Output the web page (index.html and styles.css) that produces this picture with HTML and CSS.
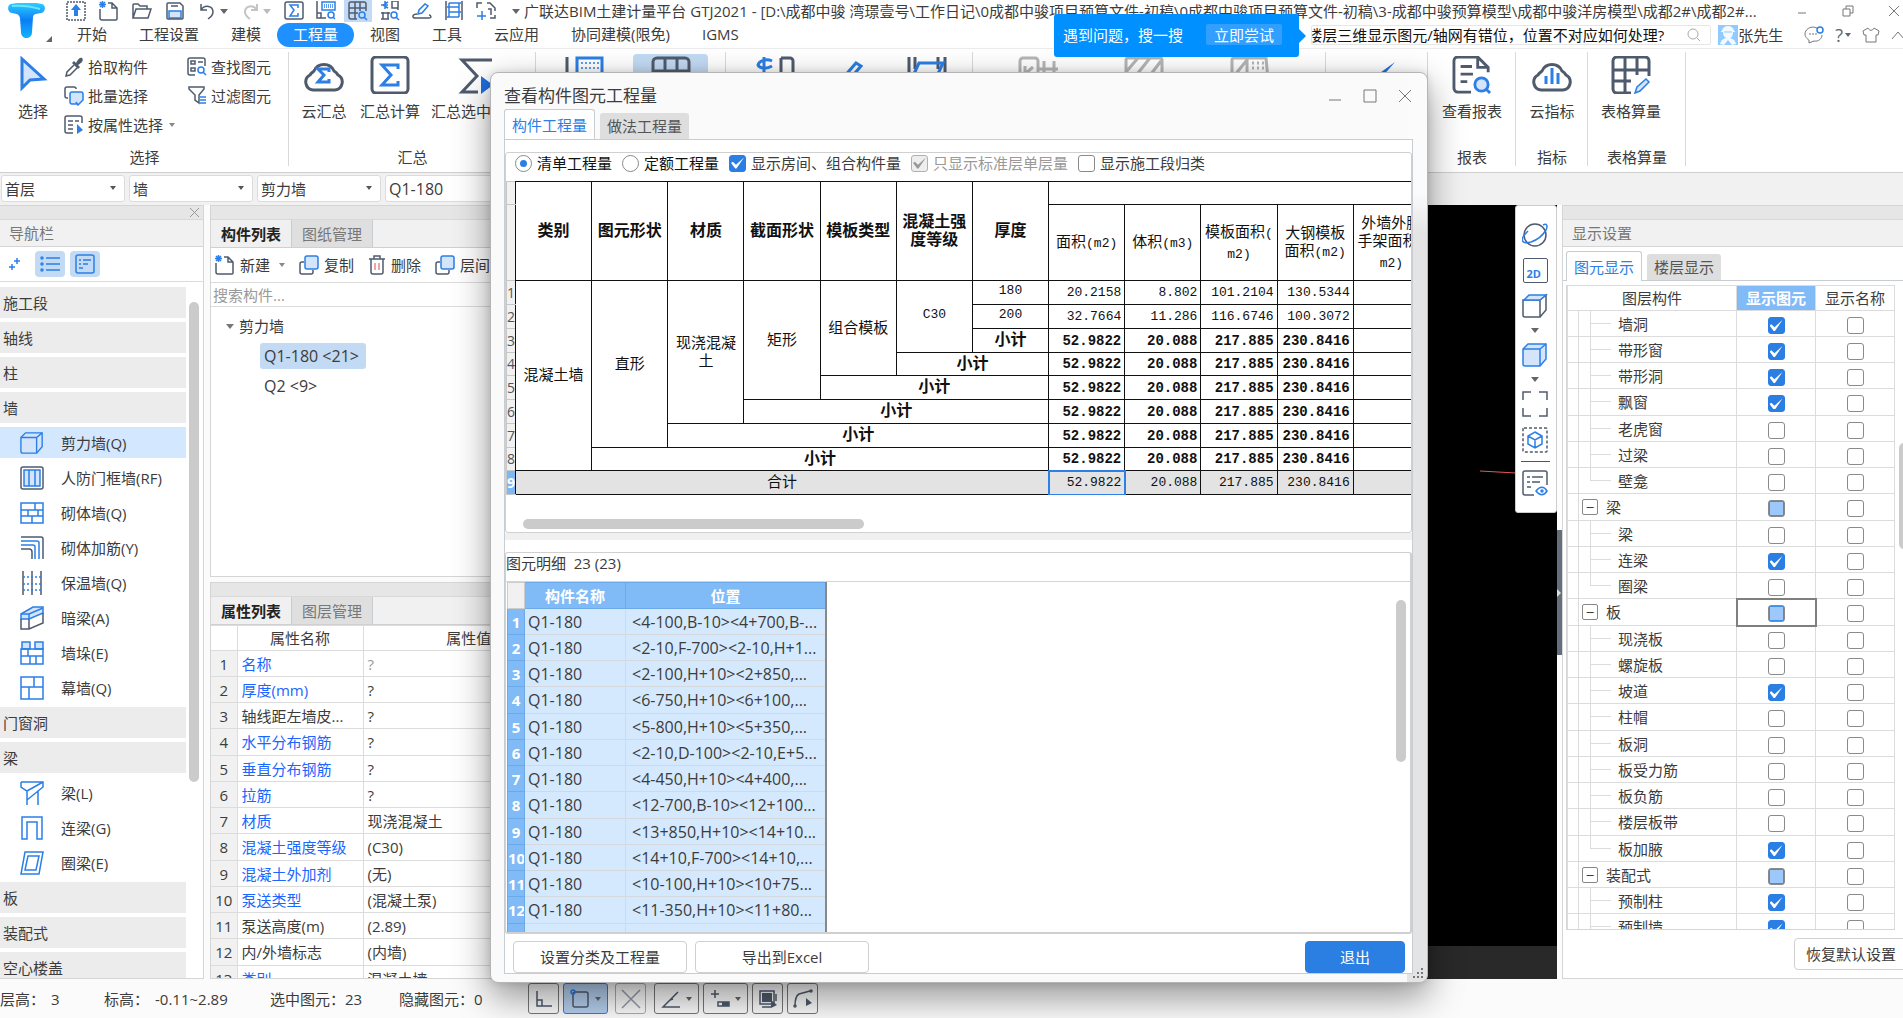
FILE: index.html
```html
<!DOCTYPE html>
<html lang="zh-CN">
<head>
<meta charset="utf-8">
<title>广联达BIM土建计量平台 GTJ2021</title>
<link rel="stylesheet" href="styles.css">
</head>
<body>
<svg class="defs" aria-hidden="true">
  <defs>
    <linearGradient id="logo-fill" x1="0" y1="0" x2="0" y2="1"><stop offset="0" stop-color="#2fd0ff"/><stop offset=".5" stop-color="#0b7df5"/><stop offset="1" stop-color="#12b5ff"/></linearGradient>
    <symbol id="i-newfile" viewBox="0 0 20 20"><path class="d" d="M1 8v9a2 2 0 0 0 2 2h14a1 1 0 0 0 1-1V7l-5-5H9M13 2v5h5"/><path class="b" d="M1 1l5 5M6 1L1 6M3.500 0v7M0 3.500h7"/></symbol>
    <symbol id="i-copy" viewBox="0 0 20 20"><path class="d" d="M5 7H3a2 2 0 0 0-2 2v8a2 2 0 0 0 2 2h9a2 2 0 0 0 2-2v-2"/><rect class="bf" x="6" y="1" width="13" height="13" rx="2"/></symbol>
    <symbol id="i-cube" viewBox="0 0 26 26"><path class="d" d="M1 7h17v17H3a2 2 0 0 1-2-2zM18 7l6-5v15l-6 7"/><path class="bf" d="M2 7l5-5h17l-6 5z"/></symbol>
    <symbol id="i-cubeb" viewBox="0 0 26 26"><path class="bf" d="M1 7l5-5h18v15l-6 7H3a2 2 0 0 1-2-2z"/><path class="b" d="M1 7h17v17M18 7l6-5"/></symbol>
    <symbol id="i-cloud" viewBox="0 0 40 34"><path class="d w" d="M9 32a8 8 0 0 1-3-15c1-2 3-3 4-4a11 11 0 0 1 20 0c2 1 3 2 4 4a8 8 0 0 1-3 15z"/></symbol>
    <symbol id="i-gridq" viewBox="0 0 20 20"><path class="d" d="M18 10V3a2 2 0 0 0-2-2H3a2 2 0 0 0-2 2v13a2 2 0 0 0 2 2h6M1 7h17M1 12h9M7 1v17M12 1v9"/><circle class="b" cx="14" cy="14" r="3"/><path class="b" d="M16 16l3 3"/></symbol>
  </defs>
</svg>

<header class="top">
  <div class="brand">
    <svg width="38" height="36" viewBox="0 0 38 36"><path fill="url(#logo-fill)" d="M3 1c8-2 24-2 31 0 4 1 4 8-1 9-4 1-7 0-8 4l-1 15c0 8-11 8-11 0l-1-14c-1-5-5-4-8-5C-1 9-1 2 3 1z"/><path d="M4 3c9-1 18 0 28 3" stroke="#6be4ff" stroke-width="2" fill="none"/></svg>
    <i class="corner"></i>
  </div>
  <div class="bars">
    <div class="titlebar">
      <div class="quick first">
        <button aria-label="上传"><svg width="20" height="20" viewBox="0 0 20 20"><rect class="d" stroke-dasharray="2 1" x="1" y="1" width="18" height="18"/><path fill="#2b7fe6" d="M10 3l5 6h-3v6H8V9H5z"/></svg></button>
        <button aria-label="新建工程"><svg width="20" height="20"><use href="#i-newfile"/></svg></button>
        <button aria-label="打开"><svg width="20" height="20" viewBox="0 0 20 20"><path class="d" d="M1 17V4a1 1 0 0 1 1-1h4l2 2h7v3M1 17l3-9h15l-3 9z"/></svg></button>
        <button aria-label="保存"><svg width="20" height="20" viewBox="0 0 20 20"><path class="bf" d="M4 17v-7h12v7z"/><path class="d" d="M2 3a1 1 0 0 1 1-1h12l3 3v12a1 1 0 0 1-1 1H3a1 1 0 0 1-1-1zM6 5h7"/></svg></button>
        <button aria-label="撤销"><svg width="20" height="20" viewBox="0 0 20 20"><path class="d" d="M3 3v6h6M3 9c4-6 12-4 12 2 0 3-2 5-5 7"/></svg><i class="caret"></i></button>
        <button aria-label="恢复" class="off"><svg width="20" height="20" viewBox="0 0 20 20"><path d="M16 3v6h-6M16 9C12 3 4 5 4 11c0 3 2 5 5 7" fill="none" stroke="#c4c4c4" stroke-width="2"/></svg><i class="caret"></i></button>
      </div>
      <div class="quick">
        <button aria-label="汇总计算"><svg width="20" height="20" viewBox="0 0 20 20"><rect class="d" x="1" y="1" width="18" height="17" rx="2"/><path class="b" d="M14 7V4H6l4 5-4 6h8v-3"/></svg></button>
        <button aria-label="查看计算式"><svg width="20" height="20" viewBox="0 0 20 20"><path class="d" d="M1 0v17h9M1 12h4v5"/><rect class="b" x="6" y="1" width="13" height="8"/><path class="b" stroke-dasharray="1 1" d="M8 4h9M8 6h9"/><circle class="b" cx="15" cy="14" r="3"/><path class="b" d="M17 16l2 2"/></svg></button>
        <button aria-label="查看工程量" class="on"><svg width="20" height="20"><use href="#i-gridq"/></svg></button>
        <button aria-label="查看钢筋量"><svg width="20" height="20" viewBox="0 0 20 20"><path class="b" d="M8 1L3 4l5 3M5 0v8M1 4h7"/><path class="d" d="M12 0h6v9M12 0v7h6M1 18h8M3 11v7M8 11v7M1 12h9"/><circle class="b" cx="14" cy="14" r="3"/><path class="b" d="M16 16l3 3"/></svg></button>
        <button aria-label="编辑"><svg width="20" height="20" viewBox="0 0 20 20"><path class="b" d="M6 13l1-4 6-6 3 2-6 7z"/><path class="d" d="M5 13c-5 0-5 4-2 4h14c3 0 2-3 0-3"/></svg></button>
        <button aria-label="钢筋三维"><svg width="20" height="20" viewBox="0 0 20 20"><path class="d" d="M2 0v19M18 0v19"/><path class="b" d="M5 2h12M3 6h12M5 11h12M3 16h12M5 2v14M15 2v14"/></svg></button>
        <button aria-label="添加"><svg width="20" height="20" viewBox="0 0 20 20"><path class="d" d="M1 7V2h5M11 2h3l5 5v3M19 14v3h-5"/><path class="b" d="M6 10v9M1 15h9"/><path class="d" d="M12 8h3v6"/></svg></button>
      </div>
      <i class="caret more"></i>
      <h1>广联达BIM土建计量平台 GTJ2021 - [D:\成都中骏 湾璟壹号\工作日记\0成都中骏项目预算文件-初稿\0成都中骏项目预算文件-初稿\3-成都中骏预算模型\成都中骏洋房模型\成都2#\成都2#...</h1>
      <div class="winctl">
        <button aria-label="最小化"><svg width="12" height="12" viewBox="0 0 12 12"><path class="g" d="M2 8h8" stroke-width="2"/></svg></button>
        <button aria-label="还原"><svg width="12" height="12" viewBox="0 0 12 12"><path class="g" d="M1 4h7v7H1zM4 4V1h7v7H8"/></svg></button>
        <button aria-label="关闭"><svg width="12" height="12" viewBox="0 0 12 12"><path class="g" d="M1 1l10 10M11 1L1 11"/></svg></button>
      </div>
    </div>
    <div class="menubar">
      <nav class="menu">
        <a href="#">开始</a><a href="#">工程设置</a><a href="#">建模</a><a href="#" class="on">工程量</a><a href="#">视图</a><a href="#">工具</a><a href="#">云应用</a><a href="#">协同建模(限免)</a><a href="#">IGMS</a>
      </nav>
      <div class="search"><input aria-label="搜索" value="楼层三维显示图元/轴网有错位，位置不对应如何处理?"><svg width="14" height="14" viewBox="0 0 14 14"><circle cx="6" cy="6" r="5" fill="none" stroke="#aaa"/><path d="M10 10l3 3" stroke="#aaa"/></svg></div>
      <a class="user" href="#"><svg width="20" height="20" viewBox="0 0 20 20"><path fill="#90caff" d="M0 0h20v20H0z"/><path fill="#f2f9ff" d="M4 6a6 5 0 0 1 12 0h1v1h-2c0 4-2 6-3 6 3 1 5 2 6 6l-4 1-4-5-4 5-4-1c1-4 3-5 6-6-2-1-3-3-3-6H3V6z"/><path stroke="#90caff" d="M6 7h8"/></svg>张先生</a>
      <div class="tools">
        <button aria-label="消息"><svg width="20" height="18" viewBox="0 0 20 18"><path class="g" d="M13 2C6-1 1 4 1 8s4 6 4 6v3l5-2c5 1 8-3 8-6"/><path class="g" stroke-dasharray="2 1" d="M5 8h8"/><circle class="b" cx="16" cy="4" r="3"/></svg></button>
        <button aria-label="帮助">?<i class="caret"></i></button>
        <button aria-label="皮肤"><svg width="18" height="16" viewBox="0 0 18 16"><path class="g" d="M6 1L1 4l1 4h2v7h10V8h2l1-4-5-3c-1 3-5 3-6 0z"/></svg></button>
        <button aria-label="收起"><svg width="12" height="10" viewBox="0 0 12 10"><path class="g" d="M1 9l6-7 6 7"/></svg></button>
      </div>
    </div>
  </div>
  <aside class="hint"><span>遇到问题，搜一搜</span><button>立即尝试</button></aside>
</header>

<section class="ribbon">
  <div class="group g-select">
    <div class="tools-row">
      <button class="big"><svg width="40" height="38" viewBox="0 0 40 38"><path class="bf w" d="M9 3v29l8-8 14-1z"/></svg>选择</button>
      <div class="stack">
        <button><svg width="20" height="20" viewBox="0 0 20 20"><path fill="#4f5b6d" d="M8 6l2-2 2 2c2-4 4-6 6-5 2 2 0 5-4 7l2 2-2 2z"/><path class="d" d="M10 8l-7 7-1 4 4-1 7-7"/></svg>拾取构件</button>
        <button><svg width="20" height="20" viewBox="0 0 20 20"><path class="d" d="M4 12H3a2 2 0 0 1-2-2V3a2 2 0 0 1 2-2h7a2 2 0 0 1 2 2"/><path class="bf" d="M14 18H8a2 2 0 0 1-2-2V8a2 2 0 0 1 2-2h9a2 2 0 0 1 2 2v6l-5 5-2-3"/></svg>批量选择</button>
        <button><svg width="20" height="20" viewBox="0 0 20 20"><path class="d" d="M18 8V3a2 2 0 0 0-2-2H3a2 2 0 0 0-2 2v13a2 2 0 0 0 2 2h6M4 6h5M4 10h5M4 14h5M11 6h4"/><path fill="#2b7fe6" d="M13 9v10l6-4z"/></svg>按属性选择<i class="caret"></i></button>
      </div>
      <div class="stack">
        <button><svg width="20" height="20" viewBox="0 0 20 20"><path class="d" d="M18 9V3a2 2 0 0 0-2-2H3a2 2 0 0 0-2 2v13a2 2 0 0 0 2 2h5M4 4h4v3H4zM4 11h4v3H4zM11 5h5"/><circle class="b" cx="14" cy="13" r="3"/><path class="b" d="M16 15l3 3"/></svg>查找图元</button>
        <button><svg width="20" height="20" viewBox="0 0 20 20"><path class="d" d="M2 1h15v2l-5 6v8l-4-3V9L2 3z"/><path class="b" d="M13 11h6M13 14h6M13 17h6"/></svg>过滤图元</button>
      </div>
    </div>
    <p>选择</p>
  </div>
  <div class="group g-sum">
    <div class="tools-row">
      <button class="big"><svg width="40" height="38" viewBox="0 -2 40 38"><use href="#i-cloud" width="40" height="34"/><path class="b w" d="M25 14v-3H14l6 6-6 7h11v-3"/></svg>云汇总</button>
      <button class="big"><svg width="40" height="38" viewBox="0 0 40 38"><rect class="d w" x="2" y="1" width="36" height="36" rx="4"/><path class="b w" d="M28 13V9H12l9 10-9 10h16v-4"/></svg>汇总计算</button>
      <button class="big"><svg width="40" height="38" viewBox="0 0 40 38"><path class="d w" d="M36 4H6l15 16L6 36h16"/><path fill="#1f6fe0" d="M25 20v18l12-9z"/></svg>汇总选中图元</button>
    </div>
    <p>汇总</p>
  </div>
  <div class="group g-calc">
    <div class="tools-row">
      <button class="big" aria-label="查看计算式"><svg width="40" height="38" viewBox="0 0 40 38"><path class="d w" d="M2 1v34h16"/><rect class="b w" x="12" y="2" width="25" height="18"/><path class="b" stroke-dasharray="2 2" stroke-width="2" d="M16 7h18M16 12h18"/></svg></button>
      <button class="big on" aria-label="查看工程量"><svg width="40" height="38" viewBox="0 0 40 38"><path class="d w" d="M38 20V6a4 4 0 0 0-4-4H6a4 4 0 0 0-4 4v28h18M2 15h36M14 2v32M26 2v18"/></svg></button>
    </div>
  </div>
  <div class="group g-steel">
    <div class="tools-row">
      <button class="big" aria-label="查看钢筋量"><svg width="40" height="38" viewBox="0 0 40 38"><path class="b w" d="M17 5c-6-3-13 0-14 4 2 4 9 4 14 1M9 1v20"/><path class="d w" d="M26 2h9a3 3 0 0 1 3 3v16M26 2v16h12"/></svg></button>
      <button class="big" aria-label="编辑钢筋"><svg width="40" height="38" viewBox="0 0 40 38"><path class="b w" d="M12 22L25 7l5 3-12 14"/></svg></button>
      <button class="big" aria-label="钢筋三维"><svg width="40" height="38" viewBox="0 0 40 38"><path class="d w" d="M2 1v34M38 1v34M8 1v12M31 1v12"/><path class="b w" d="M6 20L12 7h24l-6 13"/></svg></button>
    </div>
  </div>
  <div class="group g-more">
    <div class="tools-row">
      <button class="big off" aria-label="合法性检查"><svg width="40" height="38" viewBox="0 0 40 38"><path class="m" d="M2 24V5a3 3 0 0 1 3-3h12a3 3 0 0 1 3 3v18M7 10v12M7 18l8-7M20 13h20M26 5v18M36 5v18"/></svg></button>
      <button class="big off" aria-label="填充检查"><svg width="40" height="38" viewBox="0 0 40 38"><path class="m" d="M2 24V4a2 2 0 0 1 2-2h32a2 2 0 0 1 2 2v20M2 16L14 2M10 22L26 2M24 22L37 5"/></svg></button>
      <button class="big off" aria-label="分割检查"><svg width="40" height="38" viewBox="0 0 40 38"><path class="m" d="M2 24V4a2 2 0 0 1 2-2h32l2 22M17 2v22M4 20L17 4"/><path class="m" stroke-dasharray="2 3" d="M22 7h14M22 12h14"/></svg></button>
    </div>
  </div>
  <div class="group g-one">
    <div class="tools-row"><button class="big" aria-label="检查"><svg width="40" height="38" viewBox="0 0 40 38"><path fill="#1f6fe0" d="M38 6L16 22l-8-6 10 13z"/></svg></button></div>
  </div>
  <div class="group g-report">
    <div class="tools-row"><button class="big"><svg width="40" height="38" viewBox="0 0 42 40"><path class="d w" d="M20 38H6a4 4 0 0 1-4-4V5a4 4 0 0 1 4-4h21l11 11v5M27 1v11h11M9 11h12M9 19h13M9 27h7"/><circle class="bf w" cx="31" cy="30" r="7"/><path class="b w" d="M36 35l4 4"/></svg>查看报表</button></div>
    <p>报表</p>
  </div>
  <div class="group g-index">
    <div class="tools-row"><button class="big"><svg width="40" height="38" viewBox="0 -2 40 38"><use href="#i-cloud" width="40" height="34"/><path class="b w" d="M14 18v8M20 10v16M26 15v11"/></svg>云指标</button></div>
    <p>指标</p>
  </div>
  <div class="group g-sheet">
    <div class="tools-row"><button class="big"><svg width="40" height="38" viewBox="0 0 40 38"><path class="d w" d="M38 20V5a4 4 0 0 0-4-4H6a4 4 0 0 0-4 4v28a4 4 0 0 0 4 4h14M2 14h36M2 25h18M14 1v35M26 1v18"/><path class="bf" stroke-width="2" d="M24 37l2-6 9-8 3 3-9 9z"/></svg>表格算量</button></div>
    <p>表格算量</p>
  </div>
</section>

<div class="combos">
  <div class="combo"><select aria-label="楼层"><option>首层</option></select></div>
  <div class="combo"><select aria-label="构件大类"><option>墙</option></select></div>
  <div class="combo"><select aria-label="构件类型"><option>剪力墙</option></select></div>
  <div class="combo latin"><select aria-label="构件"><option>Q1-180</option></select></div>
</div>

<main class="work">
  <section class="panel nav">
    <div class="strip"><button aria-label="关闭导航栏"><svg width="9" height="9" viewBox="0 0 9 9"><path d="M0 0l9 9M9 0L0 9" stroke="#999"/></svg></button></div>
    <h2>导航栏</h2>
    <div class="nav-tools">
      <button aria-label="添加"><svg width="14" height="14" viewBox="0 0 14 14"><path class="b" d="M9 1v6M6 4h6M4 7v6M1 10h6" stroke-width="2"/></svg></button>
      <button aria-label="列表" class="on"><svg width="20" height="18" viewBox="0 0 20 18"><path class="b" d="M6 3h14M6 9h14M6 15h14"/><circle class="b" cx="2" cy="3" r="1"/><circle class="b" cx="2" cy="9" r="1"/><circle class="b" cx="2" cy="15" r="1"/></svg></button>
      <button aria-label="详情" class="on"><svg width="20" height="20" viewBox="0 0 20 20"><rect class="b" x="1" y="1" width="18" height="18" rx="2"/><path class="b" d="M4 6h2M8 6h8M4 10h2M8 10h5M4 14h4"/></svg></button>
    </div>
    <div class="nav-body">
      <ul>
        <li class="cat">施工段</li><li class="cat">轴线</li><li class="cat">柱</li><li class="cat">墙</li>
        <li class="on"><svg width="24" height="24" viewBox="0 0 26 26"><use href="#i-cubeb"/></svg>剪力墙(Q)</li>
        <li><svg width="24" height="24" viewBox="0 0 24 24"><rect class="d" x="1" y="1" width="22" height="22" rx="2"/><path class="bf" d="M4 4h16v16H4z"/><path class="b" d="M9 4v16M15 4v16"/></svg>人防门框墙(RF)</li>
        <li><svg width="24" height="24" viewBox="0 0 24 24"><path class="b" d="M1 2h22v20H1zM1 9h22M1 15h22M15 2v7M8 9v6M18 9v6M12 15v7"/></svg>砌体墙(Q)</li>
        <li><svg width="24" height="24" viewBox="0 0 24 24"><path class="d" d="M1 1h20a2 2 0 0 1 2 2v20M1 13h8a3 3 0 0 1 3 3v7"/><path class="b" d="M1 5h16a2 2 0 0 1 2 2v16M1 9h12a2 2 0 0 1 2 2v12"/></svg>砌体加筋(Y)</li>
        <li><svg width="24" height="24" viewBox="0 0 24 24"><path class="d" d="M3 0v24M12 0v24M21 0v24"/><path class="b" stroke-dasharray="2 2" d="M3 6h18M3 13h18M3 19h18"/></svg>保温墙(Q)</li>
        <li><svg width="24" height="24" viewBox="0 0 24 24"><path class="bf" d="M1 8l12-7h10v6L9 13H1z"/><path class="d" d="M1 13v10h8L23 17V7M9 13v10"/><path class="b" d="M1 8h8l14-6M9 8v5"/></svg>暗梁(A)</li>
        <li><svg width="24" height="24" viewBox="0 0 24 24"><path class="bf" d="M2 1h8v7H2zM15 1h8v7h-8z"/><path class="b" d="M1 8h22v15H1zM1 15h22M8 8v7M16 15v8M10 15v8"/></svg>墙垛(E)</li>
        <li><svg width="24" height="24" viewBox="0 0 24 24"><path class="b" d="M1 1h22v22H1zM1 11h22M14 1v10M9 11v12"/></svg>幕墙(Q)</li>
        <li class="cat">门窗洞</li><li class="cat">梁</li>
        <li><svg width="24" height="24" viewBox="0 0 24 24"><path class="b" d="M1 1h22v5L7 19M1 1v5l6 4 16-9M7 10v14M18 10v14"/></svg>梁(L)</li>
        <li><svg width="24" height="24" viewBox="0 0 24 24"><path class="b" d="M2 23V1h20v22h-5V6H7v17z"/></svg>连梁(G)</li>
        <li><svg width="24" height="24" viewBox="0 0 24 24"><path class="b" d="M5 1h18l-4 22H1zM8 5h11l-3 14H5z"/></svg>圈梁(E)</li>
        <li class="cat">板</li><li class="cat">装配式</li><li class="cat">空心楼盖</li>
      </ul>
      <div class="vbar"></div>
    </div>
  </section>

  <div class="left-col">
    <section class="panel comp">
      <div class="strip"></div>
      <div class="flat-tabs"><button class="on">构件列表</button><button>图纸管理</button></div>
      <div class="comp-tools">
        <button><svg width="20" height="20"><use href="#i-newfile"/></svg>新建<i class="caret"></i></button>
        <button><svg width="20" height="20"><use href="#i-copy"/></svg>复制</button>
        <button><svg width="18" height="20" viewBox="0 0 18 20"><path class="d" d="M1 4h16M6 4V1h6v3M3 4v13a2 2 0 0 0 2 2h8a2 2 0 0 0 2-2V4"/><path d="M7 8v7M11 8v7" stroke="#e04848"/></svg>删除</button>
        <button><svg width="20" height="20"><use href="#i-copy"/></svg>层间复制</button>
      </div>
      <input class="find" aria-label="搜索构件" placeholder="搜索构件...">
      <ul class="tree">
        <li><i class="caret"></i>剪力墙
          <ul><li><span class="on">Q1-180 &lt;21&gt;</span></li><li><span>Q2 &lt;9&gt;</span></li></ul>
        </li>
      </ul>
    </section>
    <section class="panel props">
      <div class="strip"></div>
      <div class="flat-tabs"><button class="on">属性列表</button><button>图层管理</button></div>
      <div class="clip">
      <table class="grid prop-table">
        <colgroup><col class="c-no"><col class="c-name"><col></colgroup>
        <thead><tr><th></th><th>属性名称</th><th>属性值</th></tr></thead>
        <tbody>
          <tr><th>1</th><td class="lk">名称</td><td class="dim">?</td></tr>
          <tr><th>2</th><td class="lk">厚度(mm)</td><td>?</td></tr>
          <tr><th>3</th><td>轴线距左墙皮...</td><td>?</td></tr>
          <tr><th>4</th><td class="lk">水平分布钢筋</td><td>?</td></tr>
          <tr><th>5</th><td class="lk">垂直分布钢筋</td><td>?</td></tr>
          <tr><th>6</th><td class="lk">拉筋</td><td>?</td></tr>
          <tr><th>7</th><td class="lk">材质</td><td>现浇混凝土</td></tr>
          <tr><th>8</th><td class="lk">混凝土强度等级</td><td>(C30)</td></tr>
          <tr><th>9</th><td class="lk">混凝土外加剂</td><td>(无)</td></tr>
          <tr><th>10</th><td class="lk">泵送类型</td><td>(混凝土泵)</td></tr>
          <tr><th>11</th><td>泵送高度(m)</td><td>(2.89)</td></tr>
          <tr><th>12</th><td>内/外墙标志</td><td>(内墙)</td></tr>
          <tr><th>13</th><td class="lk">类别</td><td>混凝土墙</td></tr>
        </tbody>
      </table>
      </div>
    </section>
  </div>

  <section class="canvas">
    <svg class="axis" width="36" height="6" viewBox="0 0 36 6"><path d="M0 2l36 2" stroke="#e0585c"/></svg>
    <div class="view-tools">
      <button aria-label="动态观察"><svg width="26" height="26" viewBox="0 0 26 26"><circle class="d" cx="13" cy="13" r="11"/><path class="b" d="M21 3c4-2 5 1 3 5-3 5-9 10-15 12-7 2-10 0-8-5 1-2 3-4 5-6"/></svg></button>
      <button aria-label="二维" class="two"><span>2D</span></button>
      <button aria-label="三维"><svg width="26" height="26"><use href="#i-cube"/></svg></button>
      <i class="caret"></i>
      <button aria-label="着色"><svg width="26" height="26"><use href="#i-cubeb"/></svg></button>
      <i class="caret"></i>
      <button aria-label="全屏"><svg width="26" height="26" viewBox="0 0 26 26"><path class="d" d="M1 9V1h8M17 1h8v8M25 17v8h-8M9 25H1v-8"/></svg></button>
      <button aria-label="局部三维"><svg width="26" height="26" viewBox="0 0 26 26"><rect class="d" stroke-dasharray="3 2" x="1" y="1" width="24" height="24" rx="1"/><path class="b" d="M13 5l7 4v8l-7 4-7-4V9zM6 9l7 4 7-4M13 13v8"/></svg></button>
      <hr>
      <button aria-label="显示设置"><svg width="26" height="26" viewBox="0 0 26 26"><path class="d" d="M25 15V3a2 2 0 0 0-2-2H3a2 2 0 0 0-2 2v20a2 2 0 0 0 2 2h9M5 7h3M10 7h11M5 12h3M10 12h8M5 17h4"/><path class="b" d="M14 21c4-5 8-5 11 0-3 5-7 5-11 0z"/><circle class="b" cx="20" cy="21" r="1"/></svg></button>
    </div>
    <footer></footer>
  </section>
  <div class="splitter"><button aria-label="收起面板"></button></div>

  <section class="panel display">
    <div class="strip"></div>
    <h2>显示设置</h2>
    <div class="tabs"><button class="on">图元显示</button><button>楼层显示</button></div>
    <div class="display-body">
      <div class="clip">
      <table class="grid layer-table">
        <colgroup><col><col class="c-check"><col class="c-check"></colgroup>
        <thead><tr><th>图层构件</th><th class="sel">显示图元</th><th>显示名称</th></tr></thead>
        <tbody>
          <tr><td class="leaf">墙洞</td><td><input type="checkbox" aria-label="墙洞图元" checked></td><td><input type="checkbox" aria-label="墙洞名称"></td></tr>
          <tr><td class="leaf">带形窗</td><td><input type="checkbox" aria-label="带形窗图元" checked></td><td><input type="checkbox" aria-label="带形窗名称"></td></tr>
          <tr><td class="leaf">带形洞</td><td><input type="checkbox" aria-label="带形洞图元" checked></td><td><input type="checkbox" aria-label="带形洞名称"></td></tr>
          <tr><td class="leaf">飘窗</td><td><input type="checkbox" aria-label="飘窗图元" checked></td><td><input type="checkbox" aria-label="飘窗名称"></td></tr>
          <tr><td class="leaf">老虎窗</td><td><input type="checkbox" aria-label="老虎窗图元"></td><td><input type="checkbox" aria-label="老虎窗名称"></td></tr>
          <tr><td class="leaf">过梁</td><td><input type="checkbox" aria-label="过梁图元"></td><td><input type="checkbox" aria-label="过梁名称"></td></tr>
          <tr><td class="leaf end">壁龛</td><td><input type="checkbox" aria-label="壁龛图元"></td><td><input type="checkbox" aria-label="壁龛名称"></td></tr>
          <tr><td class="node"><button aria-label="折叠梁">−</button>梁</td><td><input type="checkbox" class="mixed" aria-label="梁类图元"></td><td><input type="checkbox" aria-label="梁类名称"></td></tr>
          <tr><td class="leaf">梁</td><td><input type="checkbox" aria-label="梁图元"></td><td><input type="checkbox" aria-label="梁名称"></td></tr>
          <tr><td class="leaf">连梁</td><td><input type="checkbox" aria-label="连梁图元" checked></td><td><input type="checkbox" aria-label="连梁名称"></td></tr>
          <tr><td class="leaf end">圈梁</td><td><input type="checkbox" aria-label="圈梁图元"></td><td><input type="checkbox" aria-label="圈梁名称"></td></tr>
          <tr><td class="node"><button aria-label="折叠板">−</button>板</td><td class="focus"><input type="checkbox" class="mixed" aria-label="板类图元"></td><td><input type="checkbox" aria-label="板类名称"></td></tr>
          <tr><td class="leaf">现浇板</td><td><input type="checkbox" aria-label="现浇板图元"></td><td><input type="checkbox" aria-label="现浇板名称"></td></tr>
          <tr><td class="leaf">螺旋板</td><td><input type="checkbox" aria-label="螺旋板图元"></td><td><input type="checkbox" aria-label="螺旋板名称"></td></tr>
          <tr><td class="leaf">坡道</td><td><input type="checkbox" aria-label="坡道图元" checked></td><td><input type="checkbox" aria-label="坡道名称"></td></tr>
          <tr><td class="leaf">柱帽</td><td><input type="checkbox" aria-label="柱帽图元"></td><td><input type="checkbox" aria-label="柱帽名称"></td></tr>
          <tr><td class="leaf">板洞</td><td><input type="checkbox" aria-label="板洞图元"></td><td><input type="checkbox" aria-label="板洞名称"></td></tr>
          <tr><td class="leaf">板受力筋</td><td><input type="checkbox" aria-label="板受力筋图元"></td><td><input type="checkbox" aria-label="板受力筋名称"></td></tr>
          <tr><td class="leaf">板负筋</td><td><input type="checkbox" aria-label="板负筋图元"></td><td><input type="checkbox" aria-label="板负筋名称"></td></tr>
          <tr><td class="leaf">楼层板带</td><td><input type="checkbox" aria-label="楼层板带图元"></td><td><input type="checkbox" aria-label="楼层板带名称"></td></tr>
          <tr><td class="leaf end">板加腋</td><td><input type="checkbox" aria-label="板加腋图元" checked></td><td><input type="checkbox" aria-label="板加腋名称"></td></tr>
          <tr><td class="node"><button aria-label="折叠装配式">−</button>装配式</td><td><input type="checkbox" class="mixed" aria-label="装配式图元"></td><td><input type="checkbox" aria-label="装配式名称"></td></tr>
          <tr><td class="leaf">预制柱</td><td><input type="checkbox" aria-label="预制柱图元" checked></td><td><input type="checkbox" aria-label="预制柱名称"></td></tr>
          <tr><td class="leaf">预制墙</td><td><input type="checkbox" aria-label="预制墙图元" checked></td><td><input type="checkbox" aria-label="预制墙名称"></td></tr>
        </tbody>
      </table>
      </div>
      <div class="vbar"></div>
    </div>
    <div class="display-foot"><button class="btn">恢复默认设置</button></div>
  </section>
</main>

<footer class="status">
  <dl>
    <div><dt>层高：</dt><dd>3</dd></div>
    <div><dt>标高：</dt><dd>-0.11~2.89</dd></div>
    <div><dt>选中图元：</dt><dd>23</dd></div>
    <div><dt>隐藏图元：</dt><dd>0</dd></div>
  </dl>
  <div class="snap">
    <button aria-label="正交"><svg width="20" height="20" viewBox="0 0 20 20"><path class="d" d="M3 2v15h15M3 11h5v6"/></svg></button>
    <button aria-label="矩形" class="on"><svg width="20" height="20" viewBox="0 0 20 20"><rect class="d" x="3" y="3" width="15" height="15" rx="2"/><circle class="b" cx="3" cy="3" r="2"/></svg><i class="caret"></i></button>
    <button aria-label="交点" class="off"><svg width="20" height="20" viewBox="0 0 20 20"><path class="d" d="M1 1l18 18M19 1L1 19"/></svg></button>
    <button aria-label="角度"><svg width="20" height="20" viewBox="0 0 20 20"><path class="d" d="M17 3L2 18h17M9 11l3-1"/></svg><i class="caret"></i></button>
    <button aria-label="偏移"><svg width="20" height="20" viewBox="0 0 20 20"><path class="d" d="M5 1v8M1 5h8M8 13h11v4H8z"/><path fill="#4f5b6d" d="M12 13h7v4h-7z"/></svg><i class="caret"></i></button>
    <button aria-label="图层"><svg width="20" height="20" viewBox="0 0 20 20"><path fill="#4f5b6d" d="M4 4h10v9H4z"/><path class="d" d="M2 2h14v13H2zM4 18h9M18 5v7"/><path fill="#4f5b6d" d="M13 11v8l6-3z"/></svg></button>
    <button aria-label="折线"><svg width="20" height="20" viewBox="0 0 20 20"><path class="d" d="M2 17C2 8 4 6 6 5l11-3"/><circle class="d" cx="2" cy="17" r="1"/><circle class="d" cx="18" cy="2" r="1"/><path fill="#4f5b6d" d="M13 9v8l6-3z"/></svg></button>
  </div>
</footer>

<section class="dialog" role="dialog" aria-label="查看构件图元工程量">
  <header>
    <h2>查看构件图元工程量</h2>
    <div class="winctl">
      <button aria-label="最小化"><svg width="14" height="14" viewBox="0 0 14 14"><path class="g" d="M1 11h12"/></svg></button>
      <button aria-label="最大化"><svg width="14" height="14" viewBox="0 0 14 14"><path class="g" d="M1 1h12v12H1z"/></svg></button>
      <button aria-label="关闭"><svg width="14" height="14" viewBox="0 0 14 14"><path class="g" d="M1 1l12 12M13 1L1 13"/></svg></button>
    </div>
  </header>
  <div class="tabs"><button class="on">构件工程量</button><button>做法工程量</button></div>
  <div class="pane">
    <div class="upper">
      <div class="options">
        <label class="ink"><input type="radio" name="kind" checked>清单工程量</label>
        <label class="ink"><input type="radio" name="kind">定额工程量</label>
        <label><input type="checkbox" checked>显示房间、组合构件量</label>
        <label class="dim"><input type="checkbox" checked disabled>只显示标准层单层量</label>
        <label><input type="checkbox">显示施工段归类</label>
      </div>
      <div class="clip">
      <table class="qty">
        <colgroup><col class="c-rn"><col><col><col><col><col><col><col><col><col><col><col><col></colgroup>
        <thead>
          <tr><th class="rn"></th><th rowspan="2">类别</th><th rowspan="2">图元形状</th><th rowspan="2">材质</th><th rowspan="2">截面形状</th><th rowspan="2">模板类型</th><th rowspan="2">混凝土强度等级</th><th rowspan="2">厚度</th><th colspan="5"></th></tr>
          <tr class="units"><th class="rn"></th><th>面积<span>(m2)</span></th><th>体积<span>(m3)</span></th><th>模板面积<span>(<br>m2)</span></th><th>大钢模板<br>面积<span>(m2)</span></th><th>外墙外脚<br>手架面积<span>(<br>m2)</span></th></tr>
        </thead>
        <tbody>
          <tr><th class="rn">1</th><td rowspan="8">混凝土墙</td><td rowspan="7">直形</td><td rowspan="6">现浇混凝土</td><td rowspan="5">矩形</td><td rowspan="4">组合模板</td><td rowspan="3" class="mid">C30</td><td class="mid">180</td><td class="n">20.2158</td><td class="n">8.802</td><td class="n">101.2104</td><td class="n">130.5344</td><td></td></tr>
          <tr><th class="rn">2</th><td class="mid">200</td><td class="n">32.7664</td><td class="n">11.286</td><td class="n">116.6746</td><td class="n">100.3072</td><td></td></tr>
          <tr class="sub"><th class="rn">3</th><td>小计</td><td class="n">52.9822</td><td class="n">20.088</td><td class="n">217.885</td><td class="n">230.8416</td><td></td></tr>
          <tr class="sub"><th class="rn">4</th><td colspan="2">小计</td><td class="n">52.9822</td><td class="n">20.088</td><td class="n">217.885</td><td class="n">230.8416</td><td></td></tr>
          <tr class="sub"><th class="rn">5</th><td colspan="3">小计</td><td class="n">52.9822</td><td class="n">20.088</td><td class="n">217.885</td><td class="n">230.8416</td><td></td></tr>
          <tr class="sub"><th class="rn">6</th><td colspan="4">小计</td><td class="n">52.9822</td><td class="n">20.088</td><td class="n">217.885</td><td class="n">230.8416</td><td></td></tr>
          <tr class="sub"><th class="rn">7</th><td colspan="5">小计</td><td class="n">52.9822</td><td class="n">20.088</td><td class="n">217.885</td><td class="n">230.8416</td><td></td></tr>
          <tr class="sub"><th class="rn">8</th><td colspan="6">小计</td><td class="n">52.9822</td><td class="n">20.088</td><td class="n">217.885</td><td class="n">230.8416</td><td></td></tr>
          <tr class="total"><th class="rn">9</th><td colspan="7">合计</td><td class="n cur">52.9822</td><td class="n">20.088</td><td class="n">217.885</td><td class="n">230.8416</td><td></td></tr>
        </tbody>
      </table>
      </div>
      <div class="hbar"></div>
    </div>
    <div class="divider"></div>
    <div class="lower">
      <h3>图元明细&nbsp; 23 (23)</h3>
      <div class="detail">
        <div class="clip">
        <table class="items">
          <colgroup><col class="c-rn"><col class="c-name"><col></colgroup>
          <thead><tr><th class="blank"></th><th>构件名称</th><th>位置</th></tr></thead>
          <tbody>
            <tr><th>1</th><td>Q1-180</td><td>&lt;4-100,B-10&gt;&lt;4+700,B-...</td></tr>
            <tr><th>2</th><td>Q1-180</td><td>&lt;2-10,F-700&gt;&lt;2-10,H+1...</td></tr>
            <tr><th>3</th><td>Q1-180</td><td>&lt;2-100,H+10&gt;&lt;2+850,...</td></tr>
            <tr><th>4</th><td>Q1-180</td><td>&lt;6-750,H+10&gt;&lt;6+100,...</td></tr>
            <tr><th>5</th><td>Q1-180</td><td>&lt;5-800,H+10&gt;&lt;5+350,...</td></tr>
            <tr><th>6</th><td>Q1-180</td><td>&lt;2-10,D-100&gt;&lt;2-10,E+5...</td></tr>
            <tr><th>7</th><td>Q1-180</td><td>&lt;4-450,H+10&gt;&lt;4+400,...</td></tr>
            <tr><th>8</th><td>Q1-180</td><td>&lt;12-700,B-10&gt;&lt;12+100...</td></tr>
            <tr><th>9</th><td>Q1-180</td><td>&lt;13+850,H+10&gt;&lt;14+10...</td></tr>
            <tr><th>10</th><td>Q1-180</td><td>&lt;14+10,F-700&gt;&lt;14+10,...</td></tr>
            <tr><th>11</th><td>Q1-180</td><td>&lt;10-100,H+10&gt;&lt;10+75...</td></tr>
            <tr><th>12</th><td>Q1-180</td><td>&lt;11-350,H+10&gt;&lt;11+80...</td></tr>
            <tr><th></th><td></td><td></td></tr>
          </tbody>
        </table>
        </div>
        <div class="vbar"></div>
      </div>
    </div>
    <div class="actions"><button class="btn">设置分类及工程量</button><button class="btn">导出到Excel</button><button class="btn primary">退出</button></div>
  </div>
  <svg class="grip" width="11" height="11" viewBox="0 0 11 11"><path fill="#777" d="M8 0h2v2H8zM4 4h2v2H4zM8 4h2v2H8zM0 8h2v2H0zM4 8h2v2H4zM8 8h2v2H8z"/></svg>
</section>
</body>
</html>
```
FILE: styles.css
```css
* { box-sizing: border-box; }
body {
  margin: 0; height: 100vh; overflow: hidden; display: flex; flex-direction: column;
  background: #fbfbfb; color: #3c3c3c;
  font: 15px/20px "Open Sans", "Noto Sans CJK SC", sans-serif;
}
button, input, select { font: inherit; color: inherit; margin: 0; }
button { background: none; border: 0; padding: 0; display: flex; align-items: center; white-space: nowrap; }
a { color: inherit; text-decoration: none; }
h1, h2, h3, p, ul, dl, dd { margin: 0; padding: 0; font-weight: 400; font-size: 15px; }
ul { list-style: none; }
svg { flex: none; display: block; }
table { border-collapse: collapse; table-layout: fixed; }
th, td { padding: 0; font-weight: 400; }
.defs { position: absolute; width: 0; height: 0; }

/* icon strokes */
.d, .b, .bf, .g, .m { fill: none; stroke: #4f5b6d; stroke-width: 1.5; }
.b, .bf { stroke: #2b7fe6; }
.bf { fill: #d3e4fb; }
.g { stroke: #777; stroke-width: 1; }
.m { stroke: #b5b5b5; stroke-width: 3; }
.w { stroke-width: 3; }
.caret { flex: none; border: 4px solid transparent; border-top: 5px solid #666; border-bottom: 0; }

/* header */
.top { position: relative; display: flex; height: 49px; background: #fff; border-bottom: 1px solid #ececec; flex: none; }
.brand { width: 61px; padding: 3px 0 0 8px; display: flex; flex: none; }
.brand .corner { align-self: flex-end; margin-bottom: 6px; border-left: 6px solid transparent; border-bottom: 6px solid #666; }
.bars { flex: 1; min-width: 0; }
.titlebar { display: flex; height: 22px; align-items: center; }
.quick { display: flex; gap: 12px; height: 22px; padding-right: 16px; }
.quick.first { gap: 13px; padding: 0 13px 0 5px; }
.quick button { gap: 2px; }
.quick .on { background: #c2daf3; padding: 0 4px; margin: 0 -4px; }
.off .caret { border-top-color: #bbb; }
.more { margin-right: 4px; }
.titlebar h1 { flex: 1; white-space: nowrap; overflow: hidden; }
.winctl { display: flex; gap: 34px; padding-right: 3px; }
.menubar { display: flex; height: 26px; align-items: center; }
.menu { display: flex; flex: 1; height: 24px; line-height: 23px; }
.menu a { padding: 0 16px; border-radius: 12px; white-space: nowrap; }
.menu .on { background: #1e90ff; color: #fff; }
.search { display: flex; width: 400px; height: 20px; border: 1px solid #e6e6e6; border-radius: 2px; align-items: center; padding-right: 9px; margin-right: 7px; }
.search input { flex: 1; min-width: 0; border: 0; padding: 0; background: none; color: #111; text-indent: -5px; height: 18px; }
.user { display: flex; align-items: center; }
.tools { display: flex; gap: 11px; margin-left: 21px; align-items: center; color: #666; }
.tools button { font-size: 18px; }
.tools .caret { border-width: 3px; border-top-width: 4px; margin-left: 2px; }
.hint { position: absolute; z-index: 2; right: 604px; top: 14px; width: 245px; height: 43px; display: flex; align-items: center; justify-content: space-between; padding: 0 17px 2px 9px; background: #0090ff; color: #fff; border-radius: 3px; white-space: nowrap; }
.hint::after { content: ""; position: absolute; left: 100%; top: 15px; border: 7px solid transparent; border-left-color: #0090ff; border-right: 0; }
.hint button { background: #329fff; border-radius: 2px; padding: 0 8px; height: 21px; }

/* ribbon */
.ribbon { display: flex; height: 124px; background: #fff; border-bottom: 1px solid #cfcfcf; flex: none; }
.group { position: relative; display: flex; flex-direction: column; padding-top: 5px; flex: none; }
.group::after { content: ""; position: absolute; right: 0; top: 3px; bottom: 6px; border-right: 1px solid #d9d9d9; }
.group p { text-align: center; margin-top: auto; padding-bottom: 5px; }
.tools-row { display: flex; }
.big { flex-direction: column; gap: 7px; padding-top: 2px; width: 66px; height: 84px; justify-content: flex-start; }
.big.on { background: #c2daf3; border-radius: 4px; width: 75px; }
.g-select { width: 289px; }
.stack { display: flex; flex-direction: column; gap: 9px; padding-top: 3px; }
.stack button { gap: 4px; }
.stack:first-of-type { margin-left: -2px; }
.stack:last-child { padding-left: 12px; }
.stack .caret { border-width: 3px; border-top-width: 4px; border-top-color: #888; margin-left: 2px; }
.g-sum { width: 247px; }
.g-sum .tools-row { padding-left: 2px; }
.g-sum .big:last-child { width: 90px; margin-left: 8px; }
.g-calc { width: 190px; }
.g-calc .tools-row { gap: 15px; padding-left: 16px; }
.g-steel { width: 247px; }
.g-steel .tools-row { gap: 10px; padding-left: 16px; }
.g-more { width: 353px; }
.g-more .tools-row { gap: 40px; padding-left: 32px; }
.g-one { width: 102px; }
.g-one .tools-row { padding-left: 18px; }
.g-report { width: 88px; }
.g-report .tools-row { padding-left: 11px; }
.g-index { width: 72px; }
.g-index .tools-row { padding-left: 3px; }
.g-sheet { width: 98px; }
.g-sheet .tools-row { padding-left: 10px; }

.combos { display: flex; gap: 4px; height: 32px; padding: 2px 1px 3px; background: #f1f1f1; flex: none; }
.combo { position: relative; width: 124px; }
.combo select { appearance: none; width: 100%; height: 27px; border: 1px solid #dcdcdc; border-radius: 3px; background: #fff; padding: 0 3px; }
.combo.latin { font-size: 16px; }
.combo::after { content: ""; position: absolute; right: 9px; top: 11px; border: 3px solid transparent; border-top: 4px solid #555; border-bottom: 0; pointer-events: none; }

/* work area */
.work { flex: 1; min-height: 0; display: flex; background: #fbfbfb; }
.panel { display: flex; flex-direction: column; background: #fff; border: 1px solid #d5d5d5; min-height: 0; }
.strip { height: 14px; background: #e6e6e6; border-bottom: 1px solid #d9d9d9; flex: none; display: flex; justify-content: flex-end; padding-right: 4px; }
.panel h2 { height: 27px; line-height: 26px; background: #f1f1f1; border-bottom: 1px solid #d5d5d5; padding-left: 9px; color: #777; flex: none; }
.nav { width: 204px; border-left: 0; margin-right: 6px; flex: none; }
.nav-tools { display: flex; gap: 5px; height: 35px; padding: 4px 0 4px 8px; border-bottom: 1px solid #dcdcdc; flex: none; }
.nav-tools button { width: 30px; justify-content: center; border-radius: 4px; }
.nav-tools button:first-child { width: 22px; justify-content: flex-start; }
.nav-tools .on { background: #c2daf3; }
.nav-body { display: flex; min-height: 0; overflow: hidden; padding-top: 5px; }
.nav-body ul { width: 186px; display: flex; flex-direction: column; gap: 4px; }
.nav-body li { display: flex; align-items: center; gap: 17px; height: 31px; padding-left: 20px; flex: none; }
.nav-body .cat { background: #ececec; padding-left: 3px; }
.nav-body .on { background: #d3e7fe; }
.vbar { width: 10px; border-radius: 5px; background: #cbcbcb; flex: none; }
.nav-body .vbar { height: 480px; margin: 15px 0 0 3px; }

.left-col { width: 366px; display: flex; flex-direction: column; gap: 5px; flex: none; }
.comp { height: 372px; flex: none; }
.props { flex: 1; }
.clip { overflow: hidden; min-height: 0; }
.flat-tabs { display: flex; height: 28px; background: #f1f1f1; border-bottom: 1px solid #d0d0d0; flex: none; }
.flat-tabs button { width: 81px; justify-content: center; border-right: 1px solid #c8cdd2; background: #dfdfdf; color: #777; }
.flat-tabs .on { background: #f0f0f0; color: #222; font-weight: 700; }
.comp-tools { display: flex; gap: 14px; height: 34px; padding-left: 4px; flex: none; }
.comp-tools button { gap: 5px; }
.comp-tools .caret { margin-left: 4px; border-width: 3px; border-top-width: 4px; border-top-color: #888; }
.find { height: 25px; border: 1px solid #dcdcdc; border-width: 1px 0; padding: 0 2px; background: #fff; flex: none; }
.find::placeholder { color: #999; opacity: 1; }
.tree { padding: 4px 0 0 15px; line-height: 30px; }
.tree .caret { display: inline-block; margin: 0 5px 3px 0; border-top-color: #777; }
.tree ul { padding-left: 34px; font-size: 16px; }
.tree li li { height: 30px; display: flex; align-items: center; }
.tree span { line-height: 26px; padding: 0 7px 0 4px; border-radius: 3px; }
.tree .on { background: #c2daf3; }

.grid { width: 100%; }
.grid th, .grid td { border: 1px solid #dcdcdc; line-height: 22px; white-space: nowrap; overflow: hidden; }
.grid tr { height: 26px; }
.grid thead tr { height: 25px; }
.grid tbody tr:nth-child(4n) { height: 27px; }
.grid td { padding-left: 4px; }
.prop-table th, .prop-table td { border-left: 0; }
.prop-table tbody th { background: #f1f1f1; }
.prop-table .c-no { width: 26px; }
.prop-table .c-name { width: 126px; }
.lk { color: #1a66ff; }
.dim { color: #999; }

.canvas { flex: 1; position: relative; display: flex; flex-direction: column; justify-content: flex-end; background: #000; }
.canvas footer { height: 33px; background: #292929; }
.axis { position: absolute; right: 41px; top: 264px; }
.view-tools { position: absolute; top: 0; right: 0; width: 42px; height: 308px; background: #fff; border: 1px solid #ccc; border-radius: 3px; display: flex; flex-direction: column; align-items: center; gap: 10px; padding: 16px 2px 0 0; }
.view-tools .caret { margin: -1px 0; }
.view-tools hr { width: 29px; margin: -2px 0; border: 0; border-top: 1px solid #555; }
.two { width: 25px; height: 25px; border: 1px solid #4f5b6d; border-radius: 2px; align-items: flex-end; font: 700 11px/16px "Open Sans", sans-serif; color: #2b7fe6; padding-left: 3px; }
.splitter { width: 5px; background: #fdfdfd; flex: none; }
.splitter button { width: 5px; height: 125px; margin-top: 325px; background: #636f7a; }
.splitter button::after { content: ""; border: 4px solid transparent; border-left-color: #ddd; border-right: 0; }

.display { width: 341px; flex: none; border-right: 0; }
.tabs { display: flex; gap: 5px; align-items: flex-end; flex: none; border-bottom: 1px solid #c8cdd2; }
.tabs button { height: 26px; padding: 0 7px; background: #dedede; color: #555; border-radius: 3px 3px 0 0; }
.tabs .on { height: 30px; padding: 0 7px; margin-bottom: -1px; background: #fff; color: #2b7fe6; border: 1px solid #c8cdd2; border-bottom: 0; }
.display .tabs { height: 34px; padding-left: 3px; }
.display-body { display: flex; flex: 1; min-height: 0; padding: 4px 0 0 3px; }
.display-body .clip { width: 329px; flex: none; border-left: 1px solid #d5d5d5; border-bottom: 1px solid #d5d5d5; }
.display-body .vbar { height: 106px; margin: 158px 0 0 4px; }
.layer-table .c-check { width: 79px; }
.layer-table .sel { background: #80bbf8; color: #fff; font-weight: 700; }
.layer-table td { text-align: center; padding: 0; }
.layer-table td:first-child { text-align: left; padding-left: 50px; background: linear-gradient(#dcdcdc, #dcdcdc) 10px 0 / 1px 100% no-repeat; }
.layer-table td.leaf { background: linear-gradient(#dcdcdc, #dcdcdc) 10px 0 / 1px 100% no-repeat, linear-gradient(#dcdcdc, #dcdcdc) 22px 0 / 1px 100% no-repeat, linear-gradient(#dcdcdc, #dcdcdc) 22px 12px / 21px 1px no-repeat; }
.layer-table td.leaf.end { background: linear-gradient(#dcdcdc, #dcdcdc) 10px 0 / 1px 100% no-repeat, linear-gradient(#dcdcdc, #dcdcdc) 22px 0 / 1px 12px no-repeat, linear-gradient(#dcdcdc, #dcdcdc) 22px 12px / 21px 1px no-repeat; }
.layer-table td.node { padding-left: 14px; }
.node button { display: inline-block; width: 16px; height: 16px; line-height: 12px; border: 1px solid #888; border-radius: 2px; background: #fff; margin-right: 8px; vertical-align: 0; }
.layer-table .focus { outline: 2px solid #7f7f7f; outline-offset: -1px; }
.display-foot { display: flex; justify-content: flex-end; height: 48px; padding-top: 8px; flex: none; overflow: hidden; }
.btn { justify-content: center; height: 32px; background: #fff; border: 1px solid #d0d0d0; border-radius: 4px; }
.display-foot .btn { width: 120px; margin-right: -11px; padding-right: 6px; }

input[type=checkbox], input[type=radio] { appearance: none; display: inline-grid; place-content: center; width: 17px; height: 17px; border: 1px solid #8a8a8a; border-radius: 3px; background: #fff; vertical-align: middle; }
input[type=radio] { border-radius: 50%; }
input[type=radio]:checked::before { content: ""; width: 7px; height: 7px; border-radius: 50%; background: #2b7fe3; }
input[type=checkbox]:checked { background: #2b7fe3; border-color: #2b7fe3; }
input[type=checkbox]:checked::before { content: ""; width: 13px; height: 11px; background: #fff; clip-path: polygon(0 50%, 14% 38%, 38% 66%, 100% 0, 42% 100%, 32% 100%); }
input[type=checkbox]:disabled { background: #eee; border-color: #b0b0b0; }
input[type=checkbox]:disabled::before { background: #999; }
input.mixed::before { content: ""; width: 13px; height: 13px; background: #9cc8fb; border: 1px solid #3f8fea; }

/* status bar */
.status { display: flex; height: 39px; background: #fbfbfb; flex: none; align-items: center; }
.status dl { display: flex; width: 528px; white-space: nowrap; }
.status dl > div { display: flex; }
.status dt { margin-right: 6px; }
.status dl > div:nth-child(1) { width: 104px; }
.status dl > div:nth-child(2) { width: 166px; }
.status dl > div:nth-child(3) { width: 129px; }
.status div:nth-child(n+3) dt { margin-right: 0; }
.snap { display: flex; gap: 4px; height: 31px; }
.snap button { width: 31px; gap: 5px; justify-content: center; border: 1px solid #777; border-radius: 3px; }
.snap button:has(.caret) { width: 45px; }
.snap .caret { border-width: 3px; border-top-width: 4px; }
.snap .on { background: #b5cfee; border-color: #2b7fe6; margin-right: 3px; }
.snap .off { margin-right: 4px; opacity: .6; }

/* quantity window */
.dialog {
  position: absolute; z-index: 1; left: 490px; right: 475px; top: 72px; bottom: 35px; display: flex; flex-direction: column;
  padding: 0 14px 8px 13px; border: 1px solid #b5b5b5; border-radius: 8px;
  background: linear-gradient(#fbfbfb 120px, #e4e4e4 160px) right / 20px 100% no-repeat, #fafafa;
  box-shadow: 0 14px 36px rgba(0, 0, 0, .42), 0 0 8px rgba(0, 0, 0, .12);
}
.dialog > header { display: flex; justify-content: space-between; align-items: center; height: 35px; padding-top: 10px; flex: none; }
.dialog h2 { font-size: 17px; }
.dialog > .tabs { height: 31px; border-bottom: 0; }
.dialog > .tabs .on { height: 31px; }
.dialog .winctl { gap: 21px; padding-right: 1px; }
.pane { flex: 1; min-height: 0; display: flex; flex-direction: column; background: #fff; border: 1px solid #c8cdd2; padding-top: 12px; }
.upper { border: 1px solid #d0d0d0; border-radius: 3px; height: 381px; flex: none; display: flex; flex-direction: column; }
.options { display: flex; gap: 10px; height: 28px; padding: 0 9px; flex: none; align-items: flex-start; }
.options label { display: flex; align-items: center; gap: 5px; white-space: nowrap; }
.ink { color: #111; }
.qty { width: 924px; color: #111; line-height: 18px; }
.qty .c-rn { width: 9px; }
.qty th, .qty td { border: 1px solid #111; text-align: center; padding: 0 2px 3px; }
.qty thead tr { height: 23px; font-size: 16px; }
.qty thead .units { height: 76px; font-size: 15px; }
.qty thead th { font-weight: 700; }
.qty .units th { font-weight: 400; padding: 0; }
.units span, .qty .mid { font-size: 13px; font-family: "Liberation Mono", monospace; }
.qty tbody tr { height: 24px; }
.qty tbody tr:nth-child(4n) { height: 23px; }
.qty .n { text-align: right; padding: 0 3px 0 0; font: 13px/18px "Liberation Mono", monospace; }
.sub td { font-size: 16px; font-weight: 700; }
.qty .sub .n { font-size: 14px; font-weight: 700; }
.qty .rn, .qty thead .rn { padding: 0; background: #f1f1f1; border-color: #c8c8c8; border-right-color: #111; font-weight: 400; color: #555; font-size: 14px; }
.total td { background: #e3e3e3; }
.qty .total .rn { background: #7db8f5; color: #fff; font-weight: 700; }
.qty .cur { outline: 2px solid #2f80e6; outline-offset: -1px; }
.hbar { width: 341px; height: 10px; border-radius: 5px; background: #cbcbcb; margin: auto 0 3px 17px; flex: none; }
.divider { height: 7px; background: #f0f0f0; margin-bottom: 12px; flex: none; }
.lower { flex: 1; min-height: 0; display: flex; flex-direction: column; border: 1px solid #d0d0d0; border-width: 1px 2px 2px 1px; border-radius: 3px; }
.lower h3 { height: 29px; line-height: 20px; border-bottom: 1px solid #d5d5d5; flex: none; }
.detail { flex: 1; min-height: 0; display: flex; justify-content: space-between; overflow: hidden; padding-left: 1px; }
.items { width: 320px; border-right: 2px solid #888; }
.items .c-rn { width: 17px; }
.items .c-name { width: 101px; }
.items tr { height: 26px; }
.items tbody tr:nth-child(4n) { height: 27px; }
.items th { background: #80bbf8; color: #fff; font-weight: 700; border: 1px solid #6ba9e8; line-height: 22px; white-space: nowrap; overflow: hidden; }
.items .blank { background: #f1f1f1; border-color: #ccc; }
.items td { background: #d5e9fe; border: 1px solid #d5d9de; font-size: 16px; line-height: 22px; padding-left: 3px; white-space: nowrap; overflow: hidden; }
.items td:last-child { padding-left: 6px; }
.detail .vbar { height: 162px; margin: 18px 4px 0 0; }
.actions { display: flex; gap: 8px; height: 39px; padding: 7px 7px 0 8px; flex: none; }
.actions .btn { width: 174px; }
.actions .primary { width: 100px; margin-left: auto; background: #2b7fe3; border-color: #2b7fe3; color: #fff; }
.grip { position: absolute; right: 3px; bottom: 3px; }
```
